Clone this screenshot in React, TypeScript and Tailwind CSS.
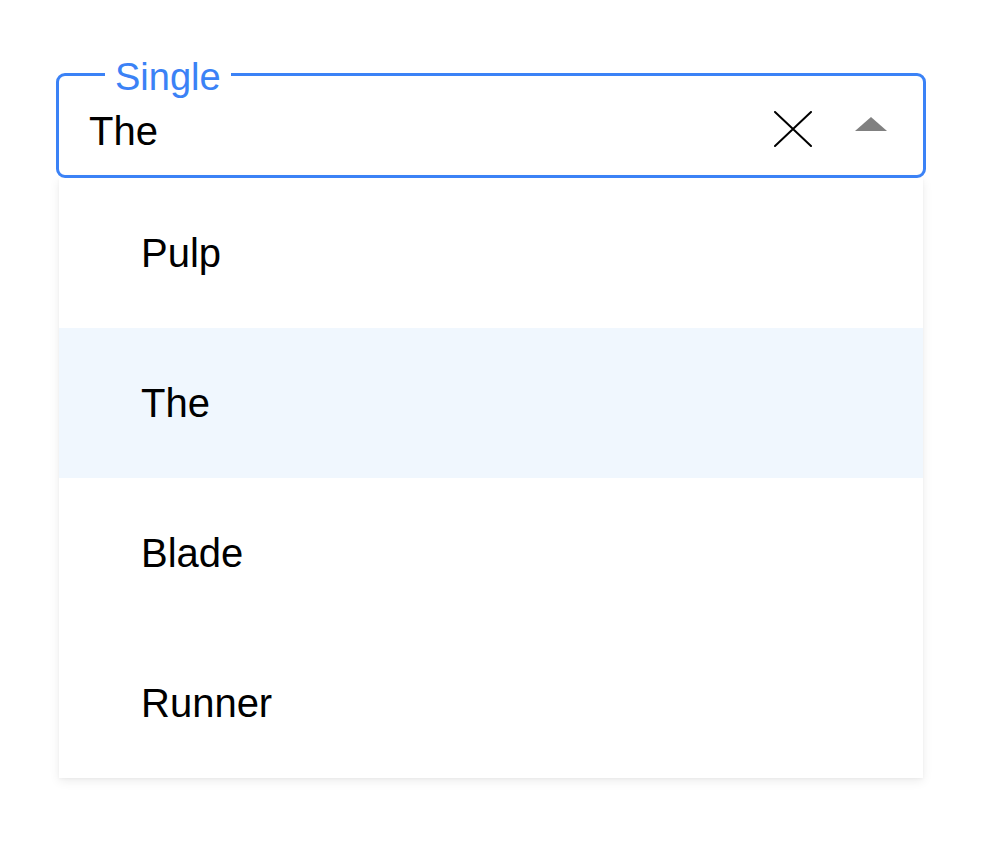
import React from 'react';

const options = ['Pulp', 'The', 'Blade', 'Runner'];

export default function App() {
  const selected = 'The';

  return (
    <div className="min-h-screen bg-white font-['Liberation_Sans',Arial,sans-serif] text-black">
      <div className="pt-[73px] pl-[56px] w-[926px]">
        {/* Select field with notched label */}
        <div className="relative h-[105px] rounded-[9px] border-[3px] border-[#3b82f6] pl-[30px] pr-[36px] flex items-start">
          <span className="absolute left-[46px] top-[-18px] bg-white px-[10px] text-[38px] leading-none text-[#3b82f6]">
            Single
          </span>
          <div className="mt-[35px] flex-1 text-[40px] leading-[40px]">{selected}</div>
          <svg className="mt-[35px] mr-[43px]" width="38" height="36" viewBox="0 0 38 36">
            <path d="M1 1 L37 35 M37 1 L1 35" stroke="#000" strokeWidth="2" fill="none" strokeLinecap="round" />
          </svg>
          <svg className="mt-[41px]" width="32" height="14" viewBox="0 0 32 14">
            <polygon points="16,0 32,14 0,14" fill="#808080" />
          </svg>
        </div>

        {/* Dropdown list */}
        <ul className="mx-[3px] bg-white shadow-[0_3px_10px_rgba(0,0,0,0.08),0_1px_3px_rgba(0,0,0,0.04)]">
          {options.map((o) => (
            <li
              key={o}
              className={`h-[150px] flex items-center pl-[82px] text-[40px] leading-none ${
                o === selected ? 'bg-[#f0f7fe]' : 'bg-white'
              }`}
            >
              {o}
            </li>
          ))}
        </ul>
      </div>
    </div>
  );
}
